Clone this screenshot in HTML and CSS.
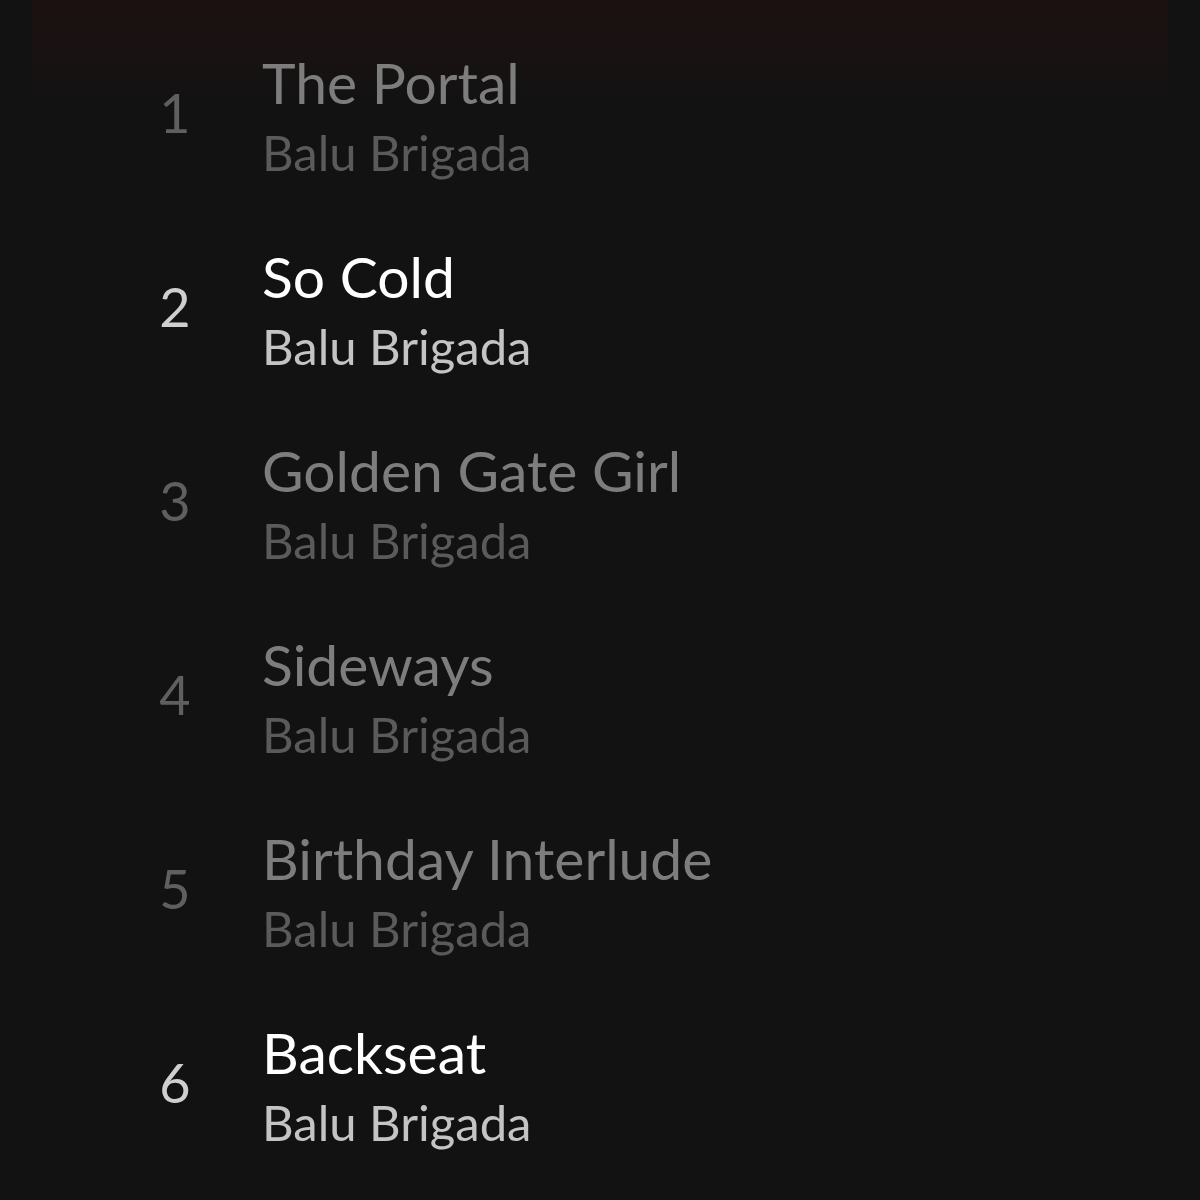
FILE: index.html
```html
<!DOCTYPE html>
<html lang="en">
<head>
  <meta charset="UTF-8">
  <meta name="viewport" content="width=device-width, initial-scale=1.0">
  <title>Tracks</title>
  <link rel="stylesheet" href="styles.css">
</head>
<body>

<div id="panel">
  <ol id="tracks">
    <li class="track">
      <span class="num">1</span>
      <div class="info">
        <div class="title">The Portal</div>
        <div class="artist">Balu Brigada</div>
      </div>
    </li>
    <li class="track active">
      <span class="num">2</span>
      <div class="info">
        <div class="title">So Cold</div>
        <div class="artist">Balu Brigada</div>
      </div>
    </li>
    <li class="track">
      <span class="num">3</span>
      <div class="info">
        <div class="title">Golden Gate Girl</div>
        <div class="artist">Balu Brigada</div>
      </div>
    </li>
    <li class="track">
      <span class="num">4</span>
      <div class="info">
        <div class="title">Sideways</div>
        <div class="artist">Balu Brigada</div>
      </div>
    </li>
    <li class="track">
      <span class="num">5</span>
      <div class="info">
        <div class="title">Birthday Interlude</div>
        <div class="artist">Balu Brigada</div>
      </div>
    </li>
    <li class="track active">
      <span class="num">6</span>
      <div class="info">
        <div class="title">Backseat</div>
        <div class="artist">Balu Brigada</div>
      </div>
    </li>
  </ol>
</div>

</body>
</html>
```

FILE: styles.css
```css
* { margin:0; padding:0; box-sizing:border-box; }

html, body { background:#121212; }
body { font-family: Lato, "Noto Sans", sans-serif; width:1200px; height:1200px; overflow:hidden; }

#panel { margin:0 32px; height:1200px; background:linear-gradient(#1c1111, #181212 60px, #121212 104px) no-repeat; }

#tracks { list-style:none; padding-top:20px; }

.track { display:flex; align-items:center; height:194px; }
.track .num { width:62px; margin-left:112px; margin-right:56px; margin-bottom:8px; text-align:center; font-size:54px; line-height:60px; color:#5f5f5f; }
.track .title { font-size:57px; line-height:70px; color:#7d7d7d; white-space:nowrap; }
.track .artist { font-size:49px; line-height:70px; color:#5a5a5a; white-space:nowrap; }

.track.active .num { color:#cfcfcf; }
.track.active .title { color:#fff; }
.track.active .artist { color:#c4c4c4; }
```
